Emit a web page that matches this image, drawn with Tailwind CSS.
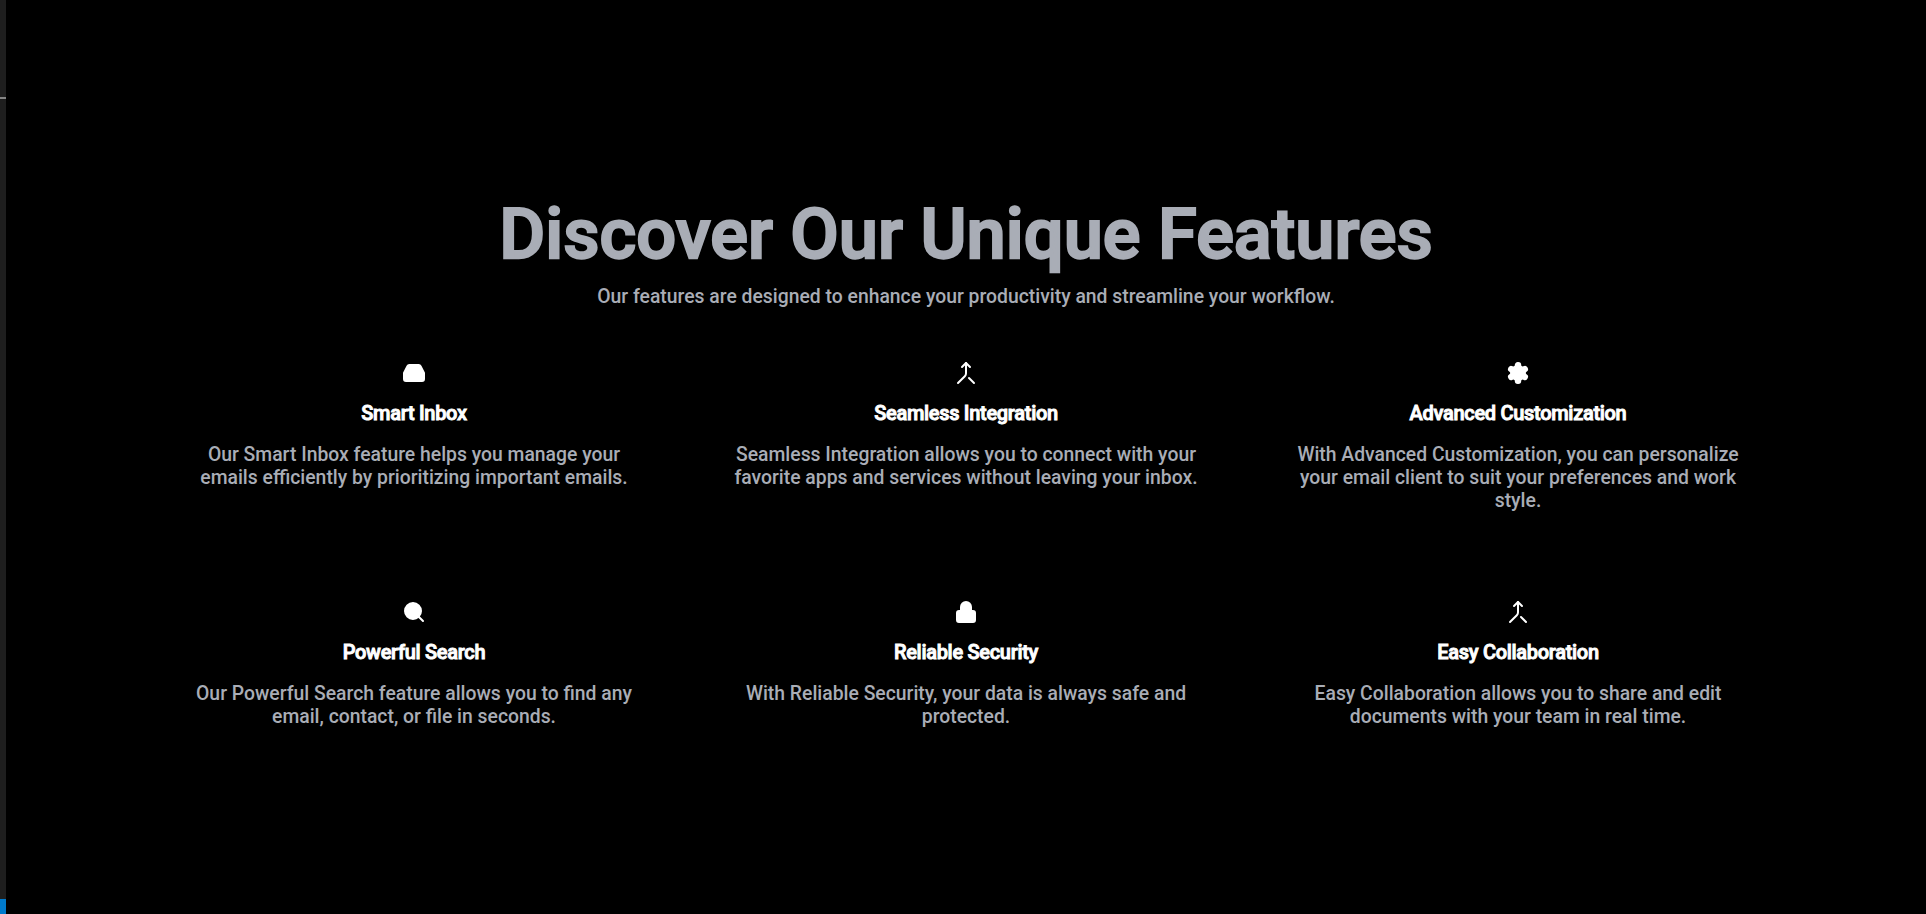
<!DOCTYPE html>
<html lang="en"><head><meta charset="utf-8"><title>Features</title>
<script src="https://cdn.jsdelivr.net/npm/@tailwindcss/browser@4"></script></head>
<body class="bg-black font-['Roboto',sans-serif] font-medium overflow-hidden">
<div class="flex h-screen">
<aside class="w-[6px] shrink-0 bg-[#1e1e1e] flex flex-col"><div class="h-[97px]"></div><div class="h-[2px] bg-[#858585]"></div><div class="grow"></div><div class="h-[15px] bg-[#007acc]"></div></aside>
<section class="grow pt-[198px] px-[132px] text-center text-[#a9adb6]">
<h1 class="text-[70.4px] leading-[72px] tracking-[0.03px] [-webkit-text-stroke:2.25px_#a9adb6]">Discover Our Unique Features</h1>
<p class="mt-[15px] text-[19.35px] leading-[24px]">Our features are designed to enhance your productivity and streamline your workflow.</p>
<div class="mt-[52px] grid grid-cols-3 [&_svg]:size-6 [&_svg]:mx-auto [&_svg]:fill-white [&_svg]:stroke-white [&_svg]:stroke-2 [&_h2]:mt-[14px] [&_h2]:text-xl [&_h2]:tracking-[-0.3px] [&_h2]:[-webkit-text-stroke:0.9px_white] [&_h2]:leading-7 [&_h2]:text-white [&_p]:mt-4 [&_p]:text-[19.35px] [&_p]:leading-[23px]">
<article class="h-[239px] px-[42px]"><svg viewBox="0 0 24 24" stroke-linecap="round" stroke-linejoin="round"><path d="M5.45 5.11 2 12v6a2 2 0 0 0 2 2h16a2 2 0 0 0 2-2v-6l-3.45-6.89A2 2 0 0 0 16.76 4H7.24a2 2 0 0 0-1.79 1.11z"/></svg><h2>Smart Inbox</h2><p>Our Smart Inbox feature helps you manage your emails efficiently by prioritizing important emails.</p></article>
<article class="h-[239px] px-[42px]"><svg viewBox="0 0 24 24" stroke-linecap="round" stroke-linejoin="round"><g fill="none"><path d="m8 6 4-4 4 4"/><path d="M12 2v10.3a4 4 0 0 1-1.172 2.872L4 22"/><path d="m20 22-5-5"/></g></svg><h2>Seamless Integration</h2><p>Seamless Integration allows you to connect with your favorite apps and services without leaving your inbox.</p></article>
<article class="h-[239px] px-[42px]"><svg viewBox="0 0 24 24" stroke-linecap="round" stroke-linejoin="round"><path d="M12.22 2h-.44a2 2 0 0 0-2 2v.18a2 2 0 0 1-1 1.73l-.43.25a2 2 0 0 1-2 0l-.15-.08a2 2 0 0 0-2.73.73l-.22.38a2 2 0 0 0 .73 2.73l.15.1a2 2 0 0 1 1 1.72v.51a2 2 0 0 1-1 1.74l-.15.09a2 2 0 0 0-.73 2.73l.22.38a2 2 0 0 0 2.73.73l.15-.08a2 2 0 0 1 2 0l.43.25a2 2 0 0 1 1 1.73V20a2 2 0 0 0 2 2h.44a2 2 0 0 0 2-2v-.18a2 2 0 0 1 1-1.73l.43-.25a2 2 0 0 1 2 0l.15.08a2 2 0 0 0 2.73-.73l.22-.39a2 2 0 0 0-.73-2.73l-.15-.08a2 2 0 0 1-1-1.74v-.5a2 2 0 0 1 1-1.74l.15-.09a2 2 0 0 0 .73-2.73l-.22-.38a2 2 0 0 0-2.73-.73l-.15.08a2 2 0 0 1-2 0l-.43-.25a2 2 0 0 1-1-1.73V4a2 2 0 0 0-2-2z"/></svg><h2>Advanced Customization</h2><p>With Advanced Customization, you can personalize your email client to suit your preferences and work style.</p></article>
<article class="h-[239px] px-[42px]"><svg viewBox="0 0 24 24" stroke-linecap="round" stroke-linejoin="round"><circle cx="11" cy="11" r="8"/><path d="m21 21-4.3-4.3"/></svg><h2>Powerful Search</h2><p>Our Powerful Search feature allows you to find any email, contact, or file in seconds.</p></article>
<article class="h-[239px] px-[42px]"><svg viewBox="0 0 24 24" stroke-linecap="round" stroke-linejoin="round"><rect x="3" y="11" width="18" height="11" rx="2"/><path d="M7 11V7a5 5 0 0 1 10 0v4"/></svg><h2>Reliable Security</h2><p>With Reliable Security, your data is always safe and protected.</p></article>
<article class="h-[239px] px-[42px]"><svg viewBox="0 0 24 24" stroke-linecap="round" stroke-linejoin="round"><g fill="none"><path d="m8 6 4-4 4 4"/><path d="M12 2v10.3a4 4 0 0 1-1.172 2.872L4 22"/><path d="m20 22-5-5"/></g></svg><h2>Easy Collaboration</h2><p>Easy Collaboration allows you to share and edit documents with your team in real time.</p></article>
</div></section></div></body></html>
